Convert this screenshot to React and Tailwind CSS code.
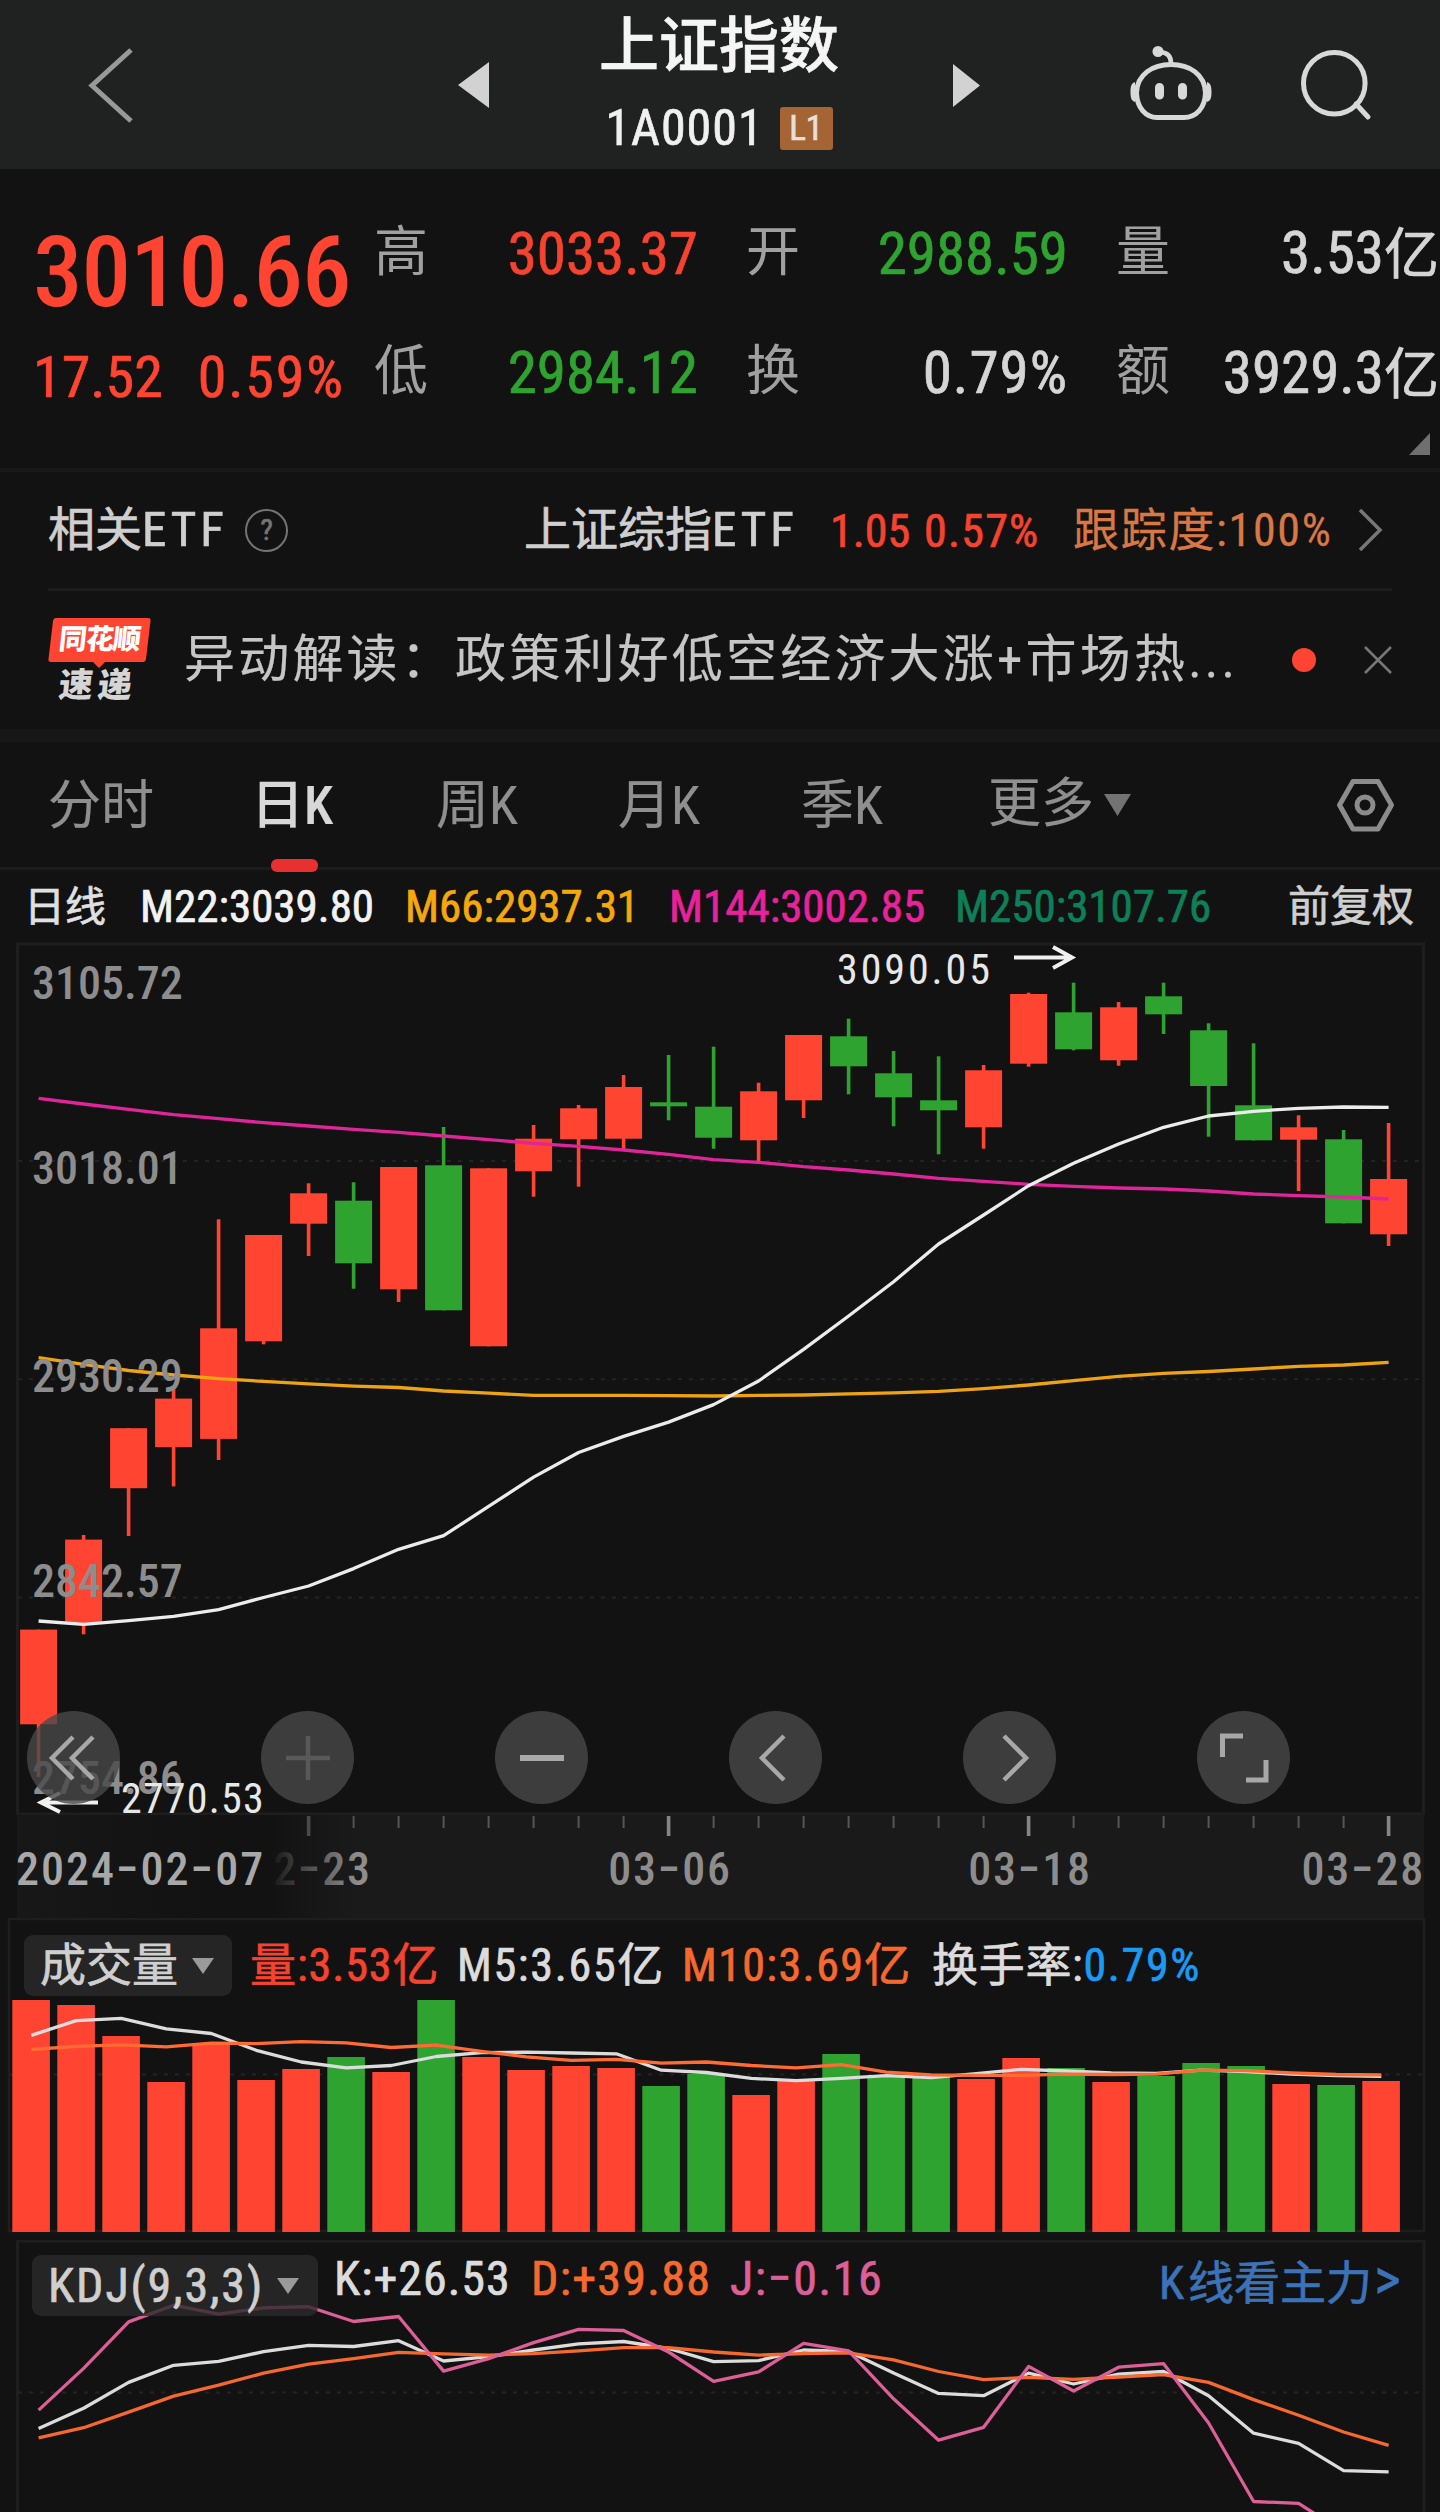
const RED = "#ff4532";
const GREEN = "#2fa32f";

// x of the i-th trading day in the price and KDJ panels
const dayX = (i) => 38.6 + i * 45;
// the volume panel sits a little further left
const volX = (i) => 31.3 + i * 45;

// [up, bodyTop, bodyBottom, wickTop, wickBottom]
const candles = [
    [1, 1629.6, 1724.3, 1629.6, 1777],
    [1, 1539.6, 1622.9, 1535, 1634.3],
    [1, 1428.2, 1488.2, 1428.2, 1536],
    [1, 1398.6, 1447.1, 1388, 1486.4],
    [1, 1328.3, 1438.9, 1219.3, 1460],
    [1, 1235, 1341.3, 1235, 1344.3],
    [1, 1193.3, 1223.7, 1183.3, 1256],
    [0, 1200.7, 1263.3, 1182.3, 1288.7],
    [1, 1167, 1289.3, 1167, 1302],
    [0, 1165.3, 1310.3, 1127, 1310.3],
    [1, 1168.3, 1346.3, 1168.3, 1346.3],
    [1, 1138.7, 1171.3, 1125, 1196.7],
    [1, 1108.3, 1139.3, 1105, 1186.7],
    [1, 1087, 1138.7, 1075, 1150],
    [0, 1102.3, 1106.3, 1055, 1120.3],
    [0, 1106.7, 1137.7, 1046.7, 1148.7],
    [1, 1091.3, 1140.3, 1082.7, 1161.7],
    [1, 1035, 1100.3, 1035, 1118],
    [0, 1036.3, 1066.3, 1018.7, 1094.3],
    [0, 1073.3, 1097.3, 1051, 1126.3],
    [0, 1100.3, 1110.3, 1056.3, 1154.3],
    [1, 1070.3, 1127.3, 1065, 1148.7],
    [1, 994, 1063.7, 992.7, 1066.7],
    [0, 1012.3, 1049.3, 982.7, 1050.3],
    [1, 1007.3, 1060.3, 1002, 1065.7],
    [0, 996.3, 1014.3, 982.7, 1034],
    [0, 1030.3, 1086, 1023.3, 1136.7],
    [0, 1105.3, 1140.3, 1043.3, 1140.3],
    [1, 1127.3, 1139.7, 1115.3, 1191],
    [0, 1139.3, 1223.3, 1130, 1223.3],
    [1, 1179, 1234.3, 1123, 1246],
];

const ma22 = [
    1621, 1624.3, 1620.7, 1616.4, 1609.6, 1597.5, 1586, 1568.6, 1549.3, 1535.7, 1506.4, 1477.1, 1452.5, 1436.4,
    1422.1, 1404.6, 1381, 1349.3, 1316, 1281.7, 1244, 1215, 1185.7, 1163.3, 1144, 1127.3, 1116, 1111.3, 1108.3,
    1107, 1107.3,
];
const ma66 = [
    1357.7, 1364.3, 1370.5, 1375, 1378.6, 1381.4, 1383.9, 1386.1, 1387.5, 1391, 1393.2, 1395.4, 1395.4, 1395.4,
    1395.7, 1396, 1395.4, 1395, 1393.9, 1392.9, 1391.4, 1388.6, 1385, 1380.7, 1376.4, 1373.3, 1371.5, 1369,
    1366.3, 1365, 1362.3,
];
const ma144 = [
    1098.3, 1104, 1109.3, 1114.7, 1118.7, 1122.7, 1126, 1129.3, 1132.3, 1136, 1139.7, 1143.3, 1146.3, 1150,
    1154.3, 1159.7, 1162.3, 1166.7, 1170, 1174, 1178.3, 1181.3, 1184.3, 1186.3, 1188, 1189, 1191, 1194, 1195.7,
    1197, 1199,
];

// [up, height]
const volumes = [
    [1, 232], [1, 227], [1, 196], [1, 150], [1, 189], [1, 152], [1, 163], [0, 175], [1, 160], [0, 232],
    [1, 175], [1, 162], [1, 166], [1, 164], [0, 146], [0, 158], [1, 137], [1, 153], [0, 178], [0, 156],
    [0, 155], [1, 153], [1, 174], [0, 164], [1, 150], [0, 156], [0, 169], [0, 166], [1, 148], [0, 147],
    [1, 151],
];
const volM5 = [
    2035.4, 2020.6, 2018.3, 2028.8, 2033.5, 2050.3, 2062, 2067.8, 2065.5, 2056.5, 2052.6, 2052.2, 2053, 2053.8,
    2070.2, 2072.5, 2078.4, 2080.7, 2078.4, 2075.6, 2077.6, 2073.7, 2069.4, 2071, 2072.9, 2073.3, 2070.2,
    2071.7, 2074.1, 2075.6, 2076.4,
];
const volM10 = [
    2049.5, 2046.4, 2044.8, 2046.8, 2043.2, 2043.6, 2041.7, 2042.9, 2047.5, 2045.2, 2051.4, 2056.9, 2060.4,
    2059.3, 2063.2, 2062, 2065.5, 2067.8, 2064.7, 2072.1, 2074.9, 2075.3, 2075.3, 2074.1, 2074.5, 2074.1,
    2070.2, 2070.6, 2072.9, 2074.5, 2074.9,
];

const kdjK = [
    2428.5, 2408.2, 2382.4, 2365.3, 2361.4, 2351.6, 2345.4, 2346.5, 2340.7, 2361, 2356.7, 2350, 2343.8, 2341.5,
    2348.5, 2361.7, 2360.6, 2350, 2351.6, 2373.1, 2393.4, 2395.7, 2373.1, 2384, 2374.2, 2371.5, 2395.7, 2433.2,
    2443.3, 2470.6, 2471.8,
];
const kdjD = [
    2437.9, 2427.7, 2412.1, 2396.1, 2385.2, 2373.1, 2364.1, 2358.6, 2352.4, 2353.9, 2355.1, 2353.6, 2350.8,
    2347.7, 2347.7, 2352, 2355.1, 2353.6, 2352.8, 2359.8, 2371.5, 2379.7, 2377.4, 2379.3, 2377, 2374.6, 2382.4,
    2399.6, 2415.2, 2432, 2445.3,
];
const kdjJ = [
    2410.1, 2368.4, 2321.9, 2305.2, 2314.1, 2307.9, 2306.7, 2321.5, 2316.5, 2371.1, 2358.6, 2342.6, 2329.4,
    2330.5, 2352, 2381.3, 2371.9, 2343.4, 2350.8, 2398.8, 2440.2, 2427.3, 2366.4, 2391, 2367.2, 2363.7, 2423,
    2501.5, 2503.4, 2532, 2560,
];

const toPoints = (ys, x) => ys.map((y, i) => `${x(i)},${y}`).join(" ");

const Line = ({ ys, x = dayX, color }) => (
    <polyline points={toPoints(ys, x)} fill="none" stroke={color} strokeWidth="3.300" strokeLinejoin="round" />
);

const GridLine = ({ y, x1 = 18 }) => (
    <line x1={x1} x2="1423" y1={y} y2={y} stroke="#232323" strokeWidth="2" strokeDasharray="4 7" />
);

const Header = () => (
    <header className="flex h-[169px] shrink-0 items-start bg-[#202221]">
        <svg className="ml-[86px] mt-[46px] h-[80px] w-[52px]" viewBox="86 46 52 80" fill="none">
            <path d="M131 50 92 85.500 131 121" stroke="#999" strokeWidth="5" />
        </svg>
        <svg className="ml-[320px] mt-[62px] h-[46px] w-[31px]" viewBox="0 0 31 46">
            <path d="M0 23 31 0V46Z" fill="#d2d2d2" />
        </svg>
        <div className="flex w-[460px] flex-col items-center">
            <h1 className="mt-[9px] h-[80px] text-[60px] leading-[76px] font-medium text-[#f5f5f5]">上证指数</h1>
            <div className="mt-[8px] flex h-[62px] items-center gap-[16px]">
                <span className="text-[50px] leading-[62px] tracking-[1px] text-[#f0f0f0]">1A0001</span>
                <span className="h-[43px] w-[53px] rounded-[3px] bg-[#a56433] text-center text-[35px] leading-[43px] text-[#e6e0da]">
                    L1
                </span>
            </div>
        </div>
        <svg className="ml-[4px] mt-[64px] h-[43px] w-[27px]" viewBox="0 0 27 43">
            <path d="M27 21.500 0 0V43Z" fill="#d2d2d2" />
        </svg>
        <svg className="ml-[148px] mt-[42px] h-[84px] w-[88px]" viewBox="1128 42 88 84" fill="none">
            <path
                d="M1171 64.500C1153 64.500 1137 74 1136.500 93C1137 108 1146 117.500 1157 117.500H1184C1196 117.500 1205 108 1205.500 93C1205 74 1189 64.500 1171 64.500Z"
                stroke="#d8d8d8"
                strokeWidth="5"
            />
            <path d="M1171 63C1171 56 1167 52.500 1160 52" stroke="#d8d8d8" strokeWidth="4.500" />
            <circle cx="1158" cy="51.500" r="5.500" fill="#d8d8d8" />
            <path d="M1135 82C1131.500 83 1130.500 86 1130.500 92C1130.500 98 1131.500 101 1135 102ZM1207 82C1210.500 83 1211.500 86 1211.500 92C1211.500 98 1210.500 101 1207 102Z" fill="#d8d8d8" />
            <path d="M1159.500 87.500V95M1182.500 87.500V95" stroke="#d8d8d8" strokeWidth="9" strokeLinecap="round" />
        </svg>
        <svg className="ml-[80px] mt-[44px] h-[80px] w-[80px]" viewBox="1296 44 80 80" fill="none">
            <circle cx="1334.300" cy="83.300" r="30.800" stroke="#d8d8d8" strokeWidth="5" />
            <path d="M1356 104 1368 117" stroke="#d8d8d8" strokeWidth="5" strokeLinecap="round" />
        </svg>
    </header>
);

const Stat = ({ label, value, unit, className }) => (
    <div className="flex items-center justify-between">
        <span className="pt-[2px] text-[54px] text-[#a0a0a0] [-webkit-text-stroke:0px]">{label}</span>
        <span className={`pt-[4px] ${className}`}>
            {value}
            {unit && <span className="text-[55px]">{unit}</span>}
        </span>
    </div>
);

const Quote = () => (
    <section className="flex h-[303px] shrink-0 flex-col border-b-4 border-[#191919]">
        <div className="flex h-[260px] pt-[23px] text-[59px] leading-[120px]">
            <div className="w-[374px] pl-[33px] text-[#ff4532]">
                <div className="pt-[20px] text-[99px] leading-[120px] font-medium tracking-[-1px] [-webkit-text-stroke:0px]">
                    3010.66
                </div>
                <div className="-mt-[15px] flex gap-[35px] text-[58px]">
                    <span>17.52</span>
                    <span className="tracking-[1.8px]">0.59%</span>
                </div>
            </div>
            <div className="grid w-[1066px] grid-cols-[324px_322px_323px] grid-rows-[119px_120px] gap-x-[48px]">
                <Stat label="高" value="3033.37" className="text-[#f5432f]" />
                <Stat label="开" value="2988.59" className="text-[#2fa32f]" />
                <Stat label="量" value="3.53" unit="亿" className="text-[#d5d5d5]" />
                <Stat label="低" value="2984.12" className="text-[#2fa32f]" />
                <Stat label="换" value="0.79%" className="tracking-[1px] text-[#d5d5d5]" />
                <Stat label="额" value="3929.3" unit="亿" className="text-[#d5d5d5]" />
            </div>
        </div>
        <svg className="mt-[4px] mr-[10px] h-[22px] w-[21px] self-end" viewBox="0 0 21 22">
            <path d="M21 0V22H0Z" fill="#6f6f6f" />
        </svg>
    </section>
);

const EtfRow = () => (
    <section className="mx-[48px] flex h-[119px] shrink-0 items-center border-b-3 border-[#1d1d1d] text-[47px] leading-[60px]">
        <span className="w-[197px] text-[#cfcfcf]">
            相关<span className="text-[49px] tracking-[4px]">ETF</span>
        </span>
        <span className="flex size-[43px] items-center justify-center rounded-full border-[2.5px] border-[#747474] text-[30px] text-[#747474]">
            ?
        </span>
        <span className="ml-[236px] w-[306px] text-[#cfcfcf]">
            上证综指<span className="text-[49px] tracking-[4px]">ETF</span>
        </span>
        <span className="w-[94px] pt-[2px] text-[46px] text-[#f5432f]">1.05</span>
        <span className="w-[149px] pt-[2px] text-[46px] tracking-[1.2px] text-[#f5432f]">0.57%</span>
        <span className="w-[285px] text-[46px] tracking-[1.7px] text-[#d97745] [-webkit-text-stroke:0.3px]">跟踪度:100%</span>
        <svg className="h-[44px] w-[26px]" viewBox="0 0 26 44" fill="none">
            <path d="M2 2 22 22 2 42" stroke="#777" strokeWidth="3.500" />
        </svg>
    </section>
);

const NewsRow = () => (
    <section className="flex h-[138px] shrink-0 items-center pl-[48px]">
        <div className="relative h-[86px] w-[136px]">
            <svg className="absolute inset-0 h-[86px] w-[110px]" viewBox="0 0 110 86">
                <path d="M8 1H100Q103 1 102.500 4L98 42Q97.500 45 95 45H57L51 51L45 45H3Q0 45 .5 42L5 4Q5.500 1 8 1Z" fill={RED} />
            </svg>
            <div className="absolute top-[5px] left-[11px] -skew-x-6 text-[28px] leading-[36px] font-black tracking-[-1px] whitespace-nowrap text-white [-webkit-text-stroke:0px]">
                同花顺
            </div>
            <div className="absolute top-[49px] left-[11px] -skew-x-6 text-[34px] leading-[38px] font-black tracking-[5px] whitespace-nowrap text-[#d5d5d5] [-webkit-text-stroke:0px]">
                速递
            </div>
        </div>
        <p className="w-[1108px] text-[51px] leading-[70px] tracking-[3.2px] whitespace-nowrap text-[#c6c6c6] [-webkit-text-stroke:0.2px]">
            异动解读：政策利好低空经济大涨+市场热...
        </p>
        <span className="size-[24px] rounded-full bg-[#ff4532]" />
        <svg className="ml-[47px] size-[30px]" viewBox="0 0 30 30" fill="none">
            <path d="M2 2 28 28M28 2 2 28" stroke="#777" strokeWidth="2.500" />
        </svg>
    </section>
);

const tabs = ["分时", "日K", "周K", "月K", "季K"];

const Tabs = () => (
    <nav className="flex h-[128px] shrink-0 border-b-3 border-[#1c1c1c] pl-[48px] text-[53px] leading-[129px] text-[#8f8f8f] [-webkit-text-stroke:0.2px]">
        <div className="grid grid-cols-[203px_185px_182px_183px_187px]">
            {tabs.map((tab) => (
                <div key={tab} className={tab === "日K" ? "relative font-medium text-[#d8d8d8]" : ""}>
                    {tab}
                    {tab === "日K" && (
                        <span className="absolute -bottom-[1px] left-[20px] h-[13px] w-[47px] rounded-[6px] bg-[#e83030]" />
                    )}
                </div>
            ))}
        </div>
        <div className="flex w-[345px] items-center">
            更多
            <svg className="ml-[10px] h-[23px] w-[27px]" viewBox="0 0 27 23">
                <path d="M0 1H27L13.500 23Z" fill="#737373" />
            </svg>
        </div>
        <svg className="mt-[33px] h-[60px] w-[64px]" viewBox="1333 776 64 60" fill="none" stroke="#8c8c8c" strokeWidth="5">
            <path d="M1353 782.500H1378L1391.500 806L1378 830H1353L1339.500 806Z" strokeLinejoin="round" />
            <circle cx="1365" cy="806" r="8" />
        </svg>
    </nav>
);

const Averages = () => (
    <div className="grid h-[72px] shrink-0 grid-cols-[116px_265px_264px_286px_333px_1fr] pl-[24px] text-[45px] leading-[74px]">
        <span className="text-[41px] text-[#e0e0e0]">日线</span>
        <span className="text-[#f2f2f2]">M22:3039.80</span>
        <span className="text-[#f5a80c]">M66:2937.31</span>
        <span className="text-[#e8229b]">M144:3002.85</span>
        <span className="text-[#0d8059]">M250:3107.76</span>
        <span className="text-[42px] text-[#cfcfcf]">前复权</span>
    </div>
);

const ControlButton = ({ children }) => (
    <button className="flex size-[93px] items-center justify-center rounded-full bg-[#494949]/80">
        <svg className="size-[60px]" viewBox="-30 -30 60 60" fill="none" stroke="#a8a8a8" strokeWidth="4.500">
            {children}
        </svg>
    </button>
);

const PriceChart = () => (
    <section className="relative h-[873px] shrink-0">
        <svg className="block h-[873px] w-[1440px]" viewBox="0 942 1440 873">
            <rect x="17.500" y="944" width="1406" height="870" fill="none" stroke="#1e1e1e" strokeWidth="3" />
            <GridLine y={1161} />
            <GridLine y={1379.3} />
            <GridLine y={1597.5} />
            {candles.map(([up, top, bottom, high, low], i) => (
                <g key={i} fill={up ? RED : GREEN}>
                    <rect x={dayX(i) - 1.8} y={high} width="3.600" height={low - high} />
                    <rect x={dayX(i) - 18.5} y={top} width="37" height={bottom - top} />
                </g>
            ))}
            <Line ys={ma66} color="#eda312" />
            <Line ys={ma144} color="#e0259a" />
            <Line ys={ma22} color="#ececec" />
            <g className="text-[46px] font-medium" fill="#8d8d8d">
                <text x="32" y="999">3105.72</text>
                <text x="32" y="1184">3018.01</text>
                <text x="32" y="1391.500">2930.29</text>
                <text x="32" y="1597">2842.57</text>
                <text x="32" y="1794">2754.86</text>
            </g>
            <g className="text-[42px]" fill="#e8e8e8">
                <text x="837" y="984" letterSpacing="2.900">3090.05</text>
                <text x="121" y="1813" letterSpacing="1.200">2770.53</text>
            </g>
            <g fill="none" stroke="#f0f0f0" strokeWidth="4">
                <path d="M1014 957.500H1072M1053 947 1072 957.500 1053 968" />
                <path d="M98 1802.500H41M60 1793 41 1802.500 60 1812" />
            </g>
        </svg>
        <div className="absolute top-[769px] left-[27px] flex gap-[141px]">
            <ControlButton>
                <path d="M-1-21-22 0-1 21M19-21-2 0 19 21" />
            </ControlButton>
            <ControlButton>
                <path d="M-22 0H22M0-22V22" stroke="#595959" />
            </ControlButton>
            <ControlButton>
                <path d="M-22 0H22" strokeWidth="6" />
            </ControlButton>
            <ControlButton>
                <path d="M8-22-14 0 8 22" />
            </ControlButton>
            <ControlButton>
                <path d="M-6-22 16 0-6 22" />
            </ControlButton>
            <ControlButton>
                <path d="M-21.500-1V-22H-1M22 2V22H2" strokeWidth="5" />
            </ControlButton>
        </div>
    </section>
);

const TimeAxis = () => (
    <svg className="block h-[103px] w-[1440px] shrink-0" viewBox="0 1815 1440 103">
        <defs>
            <linearGradient id="dateFade">
                <stop offset="0" stopColor="#121212" stopOpacity="0.300" />
                <stop offset="0.350" stopColor="#121212" stopOpacity="0.800" />
                <stop offset="0.600" stopColor="#121212" />
                <stop offset="0.740" stopColor="#121212" />
                <stop offset="0.820" stopColor="#121212" stopOpacity="0.650" />
                <stop offset="1" stopColor="#121212" stopOpacity="0" />
            </linearGradient>
        </defs>
        <rect x="17" y="1815" width="1407" height="103" fill="#1a1a1a" />
        {candles.map((_, i) => {
            if (i < 6) return null;
            const major = i % 8 === 6;
            return (
                <rect
                    key={i}
                    x={dayX(i) - (major ? 1.8 : 1)}
                    y="1816"
                    width={major ? 3.6 : 2}
                    height={major ? 20 : 12}
                    fill={major ? "#858585" : "#555"}
                />
            );
        })}
        <g className="text-[46px] font-medium" fill="#8d8d8d" textAnchor="middle" letterSpacing="1.800">
            <text x="310" y="1885">02−23</text>
            <text x="670" y="1885">03−06</text>
            <text x="1030" y="1885">03−18</text>
            <text x="1425" y="1885" textAnchor="end">03−28</text>
        </g>
        <rect x="17" y="1815" width="340" height="103" fill="url(#dateFade)" />
        <text x="16" y="1885" letterSpacing="2" className="text-[46px] font-medium" fill="#a8a8a8">
            2024−02−07
        </text>
    </svg>
);

const PanelSelect = ({ children, className }) => (
    <button className={`flex h-[61px] items-center justify-between rounded-[9px] bg-[#2a2a2a]/80 text-[#cfcfcf] ${className}`}>
        {children}
        <svg className="h-[16px] w-[22px]" viewBox="0 0 22 16">
            <path d="M0 0H22L11 16Z" fill="#9a9a9a" />
        </svg>
    </button>
);

const VolumePanel = () => (
    <section className="relative h-[322px] shrink-0">
        <svg className="block h-[322px] w-[1440px]" viewBox="0 1918 1440 322">
            <rect x="9" y="1919" width="1415" height="312" fill="none" stroke="#1e1e1e" strokeWidth="2.500" />
            <GridLine y={2074.5} x1={10} />
            {volumes.map(([up, height], i) => (
                <rect key={i} x={volX(i) - 19} y={2232 - height} width="37.600" height={height} fill={up ? RED : GREEN} />
            ))}
            <Line ys={volM5} x={volX} color="#dcdcdc" />
            <Line ys={volM10} x={volX} color="#ff6b33" />
        </svg>
        <div className="absolute top-[17px] left-[24px] flex items-center text-[46px] leading-[61px] whitespace-nowrap">
            <PanelSelect className="w-[208px] pr-[18px] pl-[16px]">成交量</PanelSelect>
            <span className="ml-[18px] w-[207px] tracking-[0.9px] text-[#f5432f]">量:3.53亿</span>
            <span className="w-[225px] tracking-[1.7px] text-[#dcdcdc]">M5:3.65亿</span>
            <span className="w-[250px] tracking-[1.4px] text-[#f5692f]">M10:3.69亿</span>
            <span className="tracking-[0.7px] text-[#dcdcdc]">换手率:</span>
            <span className="tracking-[1.6px] text-[#1b9af5]">0.79%</span>
        </div>
    </section>
);

const KdjPanel = () => (
    <section className="relative h-[272px] shrink-0">
        <svg className="block h-[272px] w-[1440px]" viewBox="0 2240 1440 272">
            <path d="M17.500 2520V2241H1424V2520" fill="none" stroke="#1e1e1e" strokeWidth="3" />
            <GridLine y={2392.6} />
            <Line ys={kdjK} color="#dcdcdc" />
            <Line ys={kdjD} color="#f5692f" />
            <Line ys={kdjJ} color="#dd5f97" />
        </svg>
        <div className="absolute top-[15px] left-[32px] flex items-start text-[48px] leading-[48px] whitespace-nowrap">
            <PanelSelect className="w-[286px] pr-[19px] pl-[16px] tracking-[1.9px]">KDJ(9,3,3)</PanelSelect>
            <span className="ml-[16px] w-[197px] tracking-[1px] text-[#dcdcdc]">K:+26.53</span>
            <span className="w-[199px] tracking-[1.3px] text-[#f5692f]">D:+39.88</span>
            <span className="w-[429px] tracking-[1.6px] text-[#dd5f97]">J:−0.16</span>
            <span className="text-[46px] text-[#3c72b8]">
                <span className="pr-[4px]">K</span>线看主力<span className="pl-[2px] text-[58px]">&gt;</span>
            </span>
        </div>
    </section>
);

export default function App() {
    return (
        <main className="flex h-[2512px] w-[1440px] flex-col overflow-hidden bg-[#121212] font-['Roboto_Condensed','Noto_Sans_CJK_SC',sans-serif] [-webkit-text-stroke:0.7px]">
            <Header />
            <Quote />
            <EtfRow />
            <NewsRow />
            <div className="h-[13px] shrink-0 bg-[#171717]" />
            <Tabs />
            <Averages />
            <PriceChart />
            <TimeAxis />
            <VolumePanel />
            <KdjPanel />
        </main>
    );
}
